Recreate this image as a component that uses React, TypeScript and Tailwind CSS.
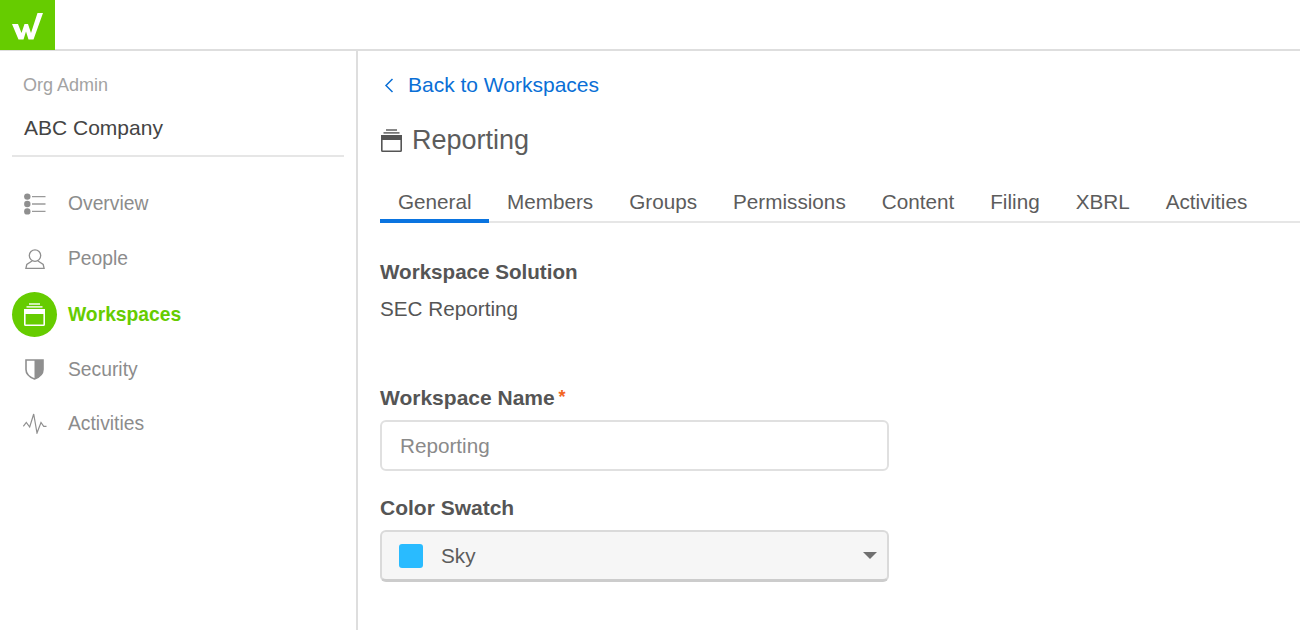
function ListIcon() {
	return (
		<svg width="22" height="22" viewBox="0 0 22 22" fill="none">
			<circle cx="3.3" cy="3.6" r="3.2" fill="#8f8f8f" />
			<circle cx="3.3" cy="11" r="3.2" fill="#8f8f8f" />
			<circle cx="3.3" cy="18.4" r="3.2" fill="#8f8f8f" />
			<path d="M8 3.6H21.5M8 11H21.5M8 18.4H21.5" stroke="#9a9a9a" strokeWidth="1.4" />
		</svg>
	);
}

function PersonIcon() {
	return (
		<svg width="20" height="20" viewBox="0 0 20 20" fill="none" stroke="#8f8f8f" strokeWidth="1.3">
			<circle cx="10" cy="6.6" r="5.7" />
			<path d="M7 12L1.8 15.5L0.9 19.3H19.1L18.2 15.5L13 12" />
		</svg>
	);
}

function WorkspaceIcon({ color }: { color: string }) {
	return (
		<svg width="21" height="23" viewBox="0 0 21 23" fill="none" stroke={color}>
			<path d="M5 1H16" strokeWidth="1.4" />
			<path d="M2.5 3.9H18.5" strokeWidth="1.4" />
			<rect x="0.8" y="6.8" width="19.4" height="15.4" rx="0.8" strokeWidth="1.6" />
			<rect x="0.8" y="6.8" width="19.4" height="3.4" fill={color} strokeWidth="1.6" />
		</svg>
	);
}

function ShieldIcon() {
	return (
		<svg width="19" height="21" viewBox="0 0 19 21" fill="none">
			<path d="M1 1H18V10.5C18 15 14 18.3 9.5 20C5 18.3 1 15 1 10.5Z" stroke="#8f8f8f" strokeWidth="1.6" />
			<path d="M9.5 1H18V10.5C18 15 14 18.3 9.5 20Z" fill="#8f8f8f" />
		</svg>
	);
}

function PulseIcon() {
	return (
		<svg width="24" height="21" viewBox="0 0 24 21" fill="none" stroke="#8f8f8f" strokeWidth="1.2">
			<path d="M0.3 13.3L3.3 9.5L6.7 14L10.7 1L14 20L18 9.5L20.7 13.3H23.5" />
		</svg>
	);
}

const navItems = [
	{ label: "Overview", icon: <ListIcon />, h: "h-[55px]" },
	{ label: "People", icon: <PersonIcon />, h: "h-[55px]" },
	{ label: "Workspaces", active: true, h: "h-[56px]" },
	{ label: "Security", icon: <ShieldIcon />, h: "h-[54px]" },
	{ label: "Activities", icon: <PulseIcon />, h: "h-[55px]" },
];

const tabs = ["General", "Members", "Groups", "Permissions", "Content", "Filing", "XBRL", "Activities"];

export default function App() {
	return (
		<div className="w-[1300px] h-[630px] overflow-hidden bg-white font-['Liberation_Sans',sans-serif] flex flex-col">
			<header className="h-[51px] shrink-0 border-b-2 border-[#dedede]">
				<div className="w-[55px] h-[50px] bg-[#66cc00]">
					<svg width="55" height="50" viewBox="0 0 55 50" fill="white">
						<path d="M12 24H18L21.5 33L24.5 24H28L31 33L37.5 13H43L33.5 39.5H28.5L26 31.5L23.5 39.5H18.5Z" />
					</svg>
				</div>
			</header>

			<div className="flex flex-1 min-h-0">
				<aside className="w-[358px] shrink-0 border-r-2 border-[#dedede] px-3">
					<div className="px-[11px] pt-6 text-lg leading-5 text-[#a3a3a3]">Org Admin</div>
					<div className="px-3 pt-[21px] pb-[15px] text-[21px] leading-6 text-[#444444] border-b-2 border-[#e6e6e6]">
						ABC Company
					</div>
					<nav className="pt-[19px]">
						{navItems.map((item) => (
							<div key={item.label} className={`flex items-center ${item.h}`}>
								{item.active ? (
									<div className="w-[45px] h-[45px] rounded-full bg-[#66cc00] flex items-center justify-center shrink-0">
										<WorkspaceIcon color="white" />
									</div>
								) : (
									<div className="w-[45px] flex justify-center shrink-0">{item.icon}</div>
								)}
								<span
									className={`ml-[11px] pt-0.5 text-[19.3px] ${item.active ? "font-bold text-[#66cc00]" : "text-[#8c8c8c]"}`}
								>
									{item.label}
								</span>
							</div>
						))}
					</nav>
				</aside>

				<main className="flex-1 pl-[22px]">
					<a className="flex items-center h-6 mt-[22px] text-[#0a6fd6] text-[21px]">
						<svg width="10" height="15" viewBox="0 0 10 15" fill="none" stroke="#0a6fd6" strokeWidth="1.5" className="ml-1">
							<path d="M8.5 1L2 7.5L8.5 14" />
						</svg>
						<span className="ml-[14px]">Back to Workspaces</span>
					</a>
					<div className="flex items-center mt-[25px] h-9">
						<span className="ml-px">
							<WorkspaceIcon color="#555555" />
						</span>
						<h1 className="ml-[10px] text-[27px] text-[#5c5c5c]">Reporting</h1>
					</div>
					<div className="flex mt-8 border-b-2 border-[#e6e6e6] h-[33px]">
						{tabs.map((tab, i) => (
							<div
								key={tab}
								className={`h-[33px] text-[20.7px] leading-6 text-[#5c5c5c] ${i === 0 ? "w-[109px] pl-[18px] border-b-4 border-[#0a74e0]" : "px-[18px]"}`}
							>
								{tab}
							</div>
						))}
					</div>

					<div className="mt-[37px] text-[20.6px] leading-6 font-bold text-[#555555]">Workspace Solution</div>
					<div className="mt-[13px] text-[20.7px] leading-6 text-[#555555]">SEC Reporting</div>

					<label className="block mt-[65px] text-[21px] leading-6 font-bold text-[#555555]">
						Workspace Name <span className="-ml-0.5 text-[#f26522] text-lg leading-none align-[2px]">*</span>
					</label>
					<div className="mt-[10px] w-[509px] h-[51px] border-2 border-[#e0e0e0] rounded-md flex items-center px-[18px] text-[20.7px] text-[#8a8a8a]">
						Reporting
					</div>

					<div className="mt-[25px] text-[21px] leading-6 font-bold text-[#555555]">Color Swatch</div>
					<div className="mt-[10px] w-[509px] h-[52px] border-2 border-b-[3px] border-[#dadada] border-b-[#cccccc] rounded-md bg-[#f6f6f6] flex items-center pl-[17px] pr-[10px] text-[20.7px] text-[#5c5c5c]">
						<span className="w-6 h-6 rounded-[3px] bg-[#29bbff]" />
						<span className="ml-[18px] flex-1">Sky</span>
						<span className="w-0 h-0 border-x-[7px] border-x-transparent border-t-[7px] border-t-[#707070]" />
					</div>
				</main>
			</div>
		</div>
	);
}
